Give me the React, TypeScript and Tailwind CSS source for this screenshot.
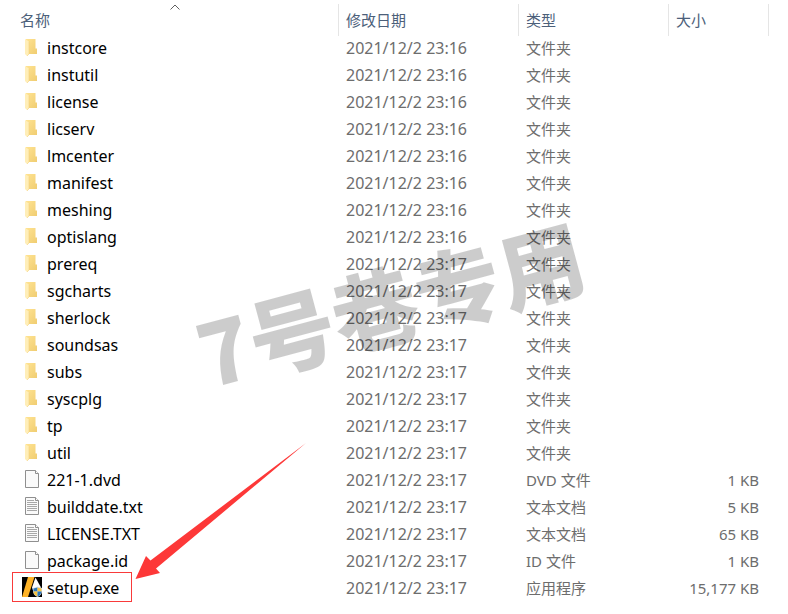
type Kind = 'folder' | 'file' | 'text' | 'exe';

interface Entry {
  name: string;
  kind: Kind;
  date: string;
  type: string;
  size?: string;
  marked?: boolean;
}

const EARLY = '2021/12/2 23:16';
const LATE = '2021/12/2 23:17';

const folder = (name: string, date: string): Entry => ({ name, kind: 'folder', date, type: '文件夹' });

const ENTRIES: Entry[] = [
  ...['instcore', 'instutil', 'license', 'licserv', 'lmcenter', 'manifest', 'meshing', 'optislang'].map((n) =>
    folder(n, EARLY),
  ),
  ...['prereq', 'sgcharts', 'sherlock', 'soundsas', 'subs', 'syscplg', 'tp', 'util'].map((n) => folder(n, LATE)),
  { name: '221-1.dvd', kind: 'file', date: LATE, type: 'DVD 文件', size: '1 KB' },
  { name: 'builddate.txt', kind: 'text', date: LATE, type: '文本文档', size: '5 KB' },
  { name: 'LICENSE.TXT', kind: 'text', date: LATE, type: '文本文档', size: '65 KB' },
  { name: 'package.id', kind: 'file', date: LATE, type: 'ID 文件', size: '1 KB' },
  { name: 'setup.exe', kind: 'exe', date: LATE, type: '应用程序', size: '15,177 KB', marked: true },
];

function EntryIcon({ kind }: { kind: Kind }) {
  return (
    <svg viewBox="0 1 24 27" className="w-6 h-[27px] shrink-0" aria-hidden="true">
      {kind === 'folder' && (
        <>
          <defs>
            <linearGradient id="folderBack" x1="0" y1="0" x2="1" y2="1">
              <stop offset="0" stopColor="#ffe391" />
              <stop offset="1" stopColor="#f0cd72" />
            </linearGradient>
          </defs>
          <path d="M6 4h9.5v9.5H17V19H8L6 17z" fill="url(#folderBack)" />
          <path d="M5 4l4 2.5V19l-2 2-2-2z" fill="#ffeeb8" />
          <path d="M9 6.5V19l-2 2" fill="none" stroke="#f3d27c" strokeWidth=".6" />
        </>
      )}
      {(kind === 'file' || kind === 'text') && (
        <>
          <path d="M5.5 3.5h10l3 3v14h-13z" fill="#fafafa" stroke="#8f8f8f" />
          <path d="M15.5 3.5v3h3" fill="#fff" stroke="#8f8f8f" />
        </>
      )}
      {kind === 'text' && (
        <path d="M7 6.5h7M7 8.5h10M7 10.5h10M7 12.5h10M7 14.5h10M7 16.5h10" stroke="#a8a8a8" />
      )}
      {kind === 'exe' && (
        <>
          <path d="M2 2h20v20H2z" fill="#000" />
          <path d="M8 2h6.500L8 22H2z" fill="#ffb327" />
          <path d="M15.500 2.500L12 12.500l1 3 8-3z" fill="#fff" />
          <path d="M17.500 11.500l4.500 1.500v3c0 3-2 5-4.500 6-2.500-1-4.500-3-4.500-6v-3z" fill="#d8e2ea" />
          <path d="M17.500 12.500v4H13.500v-3z" fill="#2a77bd" />
          <path d="M17.500 12.500l4 1v3h-4z" fill="#f7c340" />
          <path d="M13.500 16.500h4v5c-2-1-3.800-2.500-4-5z" fill="#f7c340" />
          <path d="M17.500 16.500h4c-.2 2.500-2 4-4 5z" fill="#2a77bd" />
        </>
      )}
    </svg>
  );
}

function HeaderCell({ label }: { label: string }) {
  return (
    <th scope="col" className="p-0 pt-1 align-top font-normal">
      <button type="button" className="flex w-full h-8 items-center border-l border-[#e5e5e5] pl-[7px]">
        {label}
      </button>
    </th>
  );
}

function EntryRow({ entry }: { entry: Entry }) {
  return (
    <tr className="h-[27px]">
      <td className="relative p-0 pl-5">
        <div className="flex h-[27px] items-center gap-[3px] text-base leading-5 text-black">
          <EntryIcon kind={entry.kind} />
          <span className="pb-1">{entry.name}</span>
        </div>
        {entry.marked && <div className="absolute left-3 -top-1 w-[120px] h-[30px] border border-[#f93a3a]" />}
      </td>
      <td className="p-0 pl-2 pb-1 text-base leading-5">{entry.date}</td>
      <td className="p-0 pl-2 pb-1">{entry.type}</td>
      <td className="p-0 pr-[9px] pb-1 text-right">{entry.size}</td>
      <td className="p-0" />
    </tr>
  );
}

export default function App() {
  return (
    <main className="relative min-h-screen overflow-hidden bg-white font-['Noto_Sans','Noto_Sans_CJK_SC',sans-serif] text-[15px] leading-5 text-[#6d6d6d]">
      <table className="w-full table-fixed border-collapse text-left">
        <colgroup>
          <col />
          <col className="w-[180px]" />
          <col className="w-[150px]" />
          <col className="w-[100px]" />
          <col className="w-5" />
        </colgroup>
        <thead className="text-[#4c607a]">
          <tr className="h-9">
            <th scope="col" aria-sort="ascending" className="relative p-0 pt-1 align-top font-normal">
              <button type="button" className="flex w-full h-8 items-center pl-5">
                名称
              </button>
              <svg viewBox="0 0 10 6" className="absolute top-1 left-1/2 ml-px w-[10px] h-[6px]" aria-hidden="true">
                <path d="M.5 5.500L5 1l4.500 4.500" fill="none" stroke="#606060" />
              </svg>
            </th>
            <HeaderCell label="修改日期" />
            <HeaderCell label="类型" />
            <HeaderCell label="大小" />
            <td className="p-0 pt-1 align-top">
              <div className="h-8 border-l border-[#e5e5e5]" />
            </td>
          </tr>
        </thead>
        <tbody>
          {ENTRIES.map((entry) => (
            <EntryRow key={entry.name} entry={entry} />
          ))}
        </tbody>
      </table>

      <div className="pointer-events-none absolute left-[192px] top-[259px] -rotate-15 whitespace-nowrap font-['Noto_Sans_CJK_SC',sans-serif] text-[86px] leading-[86px] font-black text-black/20">
        7号巷专用
      </div>

      <svg
        viewBox="0 0 172 138"
        className="pointer-events-none absolute left-[135px] top-[442px] w-[172px] h-[138px]"
        aria-hidden="true"
      >
        <path d="M.5 137L11 114l4.500 4.500L171 1 21 126.500l4 4.500z" fill="#fd3838" />
      </svg>
    </main>
  );
}
